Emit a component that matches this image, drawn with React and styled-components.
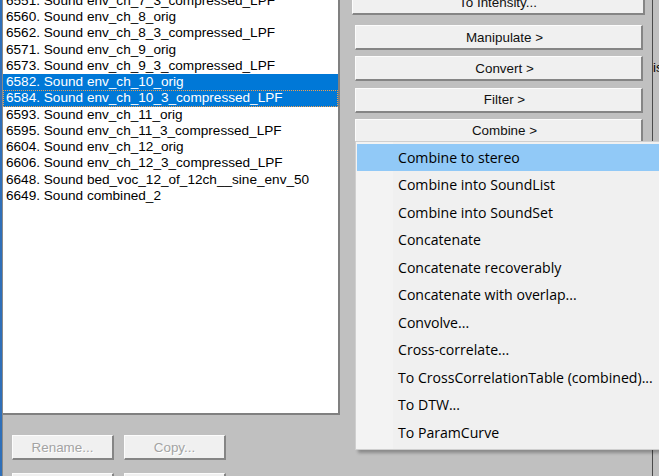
import React from "react";
import styled, { createGlobalStyle } from "styled-components";

const Global = createGlobalStyle`
  html, body { margin: 0; padding: 0; background: #c0c0c0; overflow: hidden; }
  #root { width: 659px; height: 476px; }
`;

const Screen = styled.div`
  position: relative;
  display: flex;
  width: 659px;
  height: 476px;
  overflow: hidden;
  background: #c0c0c0;
  font-family: "Liberation Sans", Arial, sans-serif;
`;

const LeftEdge = styled.div`
  flex: 0 0 3px;
  background: linear-gradient(to right, #2f6fb8 0 2px, #8a8a8a 2px 3px);
`;

const LeftPane = styled.div`
  flex: 0 0 337px;
  display: flex;
  flex-direction: column;
`;

const ListBox = styled.div`
  flex: 0 0 auto;
  height: 413px;
  width: 335px;
  background: #ffffff;
  border-right: 2px solid #808080;
  border-bottom: 2px solid #808080;
  overflow: hidden;
  box-sizing: content-box;
`;

const ListInner = styled.div`
  margin-top: -7.25px;
  display: flex;
  flex-direction: column;
`;

const Row = styled.div`
  height: 16.25px;
  line-height: 16.25px;
  padding-left: 3px;
  font-size: 13.6px;
  white-space: nowrap;
  box-sizing: border-box;
  color: ${(p) => (p.$selected ? "#ffffff" : "#000000")};
  background: ${(p) => (p.$selected ? "#0078d7" : "transparent")};
  outline: ${(p) => (p.$focus ? "1px dotted #f0a050" : "none")};
  outline-offset: -1px;
`;

const ButtonRow = styled.div`
  flex: 0 0 auto;
  display: flex;
  gap: 10px;
  padding-left: 9px;
  margin-top: ${(p) => p.$top}px;
`;

const Button = styled.div`
  box-sizing: border-box;
  width: ${(p) => p.$w || 288}px;
  height: 25px;
  flex: 0 0 auto;
  background: #f0f0f0;
  border-top: 1px solid #fcfcfc;
  border-left: 1px solid #fcfcfc;
  border-right: 2px solid #858585;
  border-bottom: 2px solid #858585;
  display: flex;
  align-items: center;
  justify-content: center;
  padding-left: ${(p) => p.$pl || 0}px;
  font-size: 13.4px;
  white-space: nowrap;
  color: ${(p) => (p.$disabled ? "#a3a3a3" : "#111111")};
  text-shadow: ${(p) => (p.$disabled ? "1px 1px 0 #ffffff" : "none")};
`;

const RightPane = styled.div`
  flex: 0 0 312px;
  display: flex;
  flex-direction: column;
  padding-left: 12px;
  box-sizing: border-box;
`;

const TopButtonWrap = styled.div`
  flex: 0 0 auto;
  margin-top: -10px;
`;

const ButtonStack = styled.div`
  flex: 0 0 auto;
  display: flex;
  flex-direction: column;
  gap: 6.25px;
  margin-top: 10px;
  margin-left: 3px;
`;

const RightEdge = styled.div`
  flex: 0 0 7px;
  border-left: 1px solid #4a4a4a;
  padding-top: 60px;
  font-size: 13.3px;
  overflow: hidden;
  white-space: nowrap;
  color: #000;
`;

const Menu = styled.div`
  position: absolute;
  left: 355px;
  top: 141px;
  width: 320px;
  padding: 1.5px 1px 3px 1px;
  background: linear-gradient(to right, #f3f3f3 0 37px, #f0f0f0 37px);
  border: 1px solid #cfcfcf;
  box-shadow: 3px 3px 3px rgba(0, 0, 0, 0.28);
  font-family: "Open Sans", "Noto Sans", sans-serif;
  font-size: 14.1px;
  color: #000;
`;

const MenuItem = styled.div`
  height: 27.5px;
  line-height: 27.5px;
  padding-left: 41px;
  white-space: nowrap;
  background: ${(p) => (p.$active ? "#91c9f7" : "transparent")};
`;

const rows = [
  "6551. Sound env_ch_7_3_compressed_LPF",
  "6560. Sound env_ch_8_orig",
  "6562. Sound env_ch_8_3_compressed_LPF",
  "6571. Sound env_ch_9_orig",
  "6573. Sound env_ch_9_3_compressed_LPF",
  "6582. Sound env_ch_10_orig",
  "6584. Sound env_ch_10_3_compressed_LPF",
  "6593. Sound env_ch_11_orig",
  "6595. Sound env_ch_11_3_compressed_LPF",
  "6604. Sound env_ch_12_orig",
  "6606. Sound env_ch_12_3_compressed_LPF",
  "6648. Sound bed_voc_12_of_12ch__sine_env_50",
  "6649. Sound combined_2",
];

const menuItems = [
  "Combine to stereo",
  "Combine into SoundList",
  "Combine into SoundSet",
  "Concatenate",
  "Concatenate recoverably",
  "Concatenate with overlap...",
  "Convolve...",
  "Cross-correlate...",
  "To CrossCorrelationTable (combined)...",
  "To DTW...",
  "To ParamCurve",
];

export default function App() {
  return (
    <>
      <Global />
      <Screen>
        <LeftEdge />
        <LeftPane>
          <ListBox>
            <ListInner>
              {rows.map((r, i) => (
                <Row key={r} $selected={i === 5 || i === 6} $focus={i === 6}>
                  {r}
                </Row>
              ))}
            </ListInner>
          </ListBox>
          <ButtonRow $top={20}>
            <Button $w={102} $disabled>Rename...</Button>
            <Button $w={102} $disabled>Copy...</Button>
          </ButtonRow>
          <ButtonRow $top={13}>
            <Button $w={102} $disabled> </Button>
            <Button $w={102} $disabled> </Button>
          </ButtonRow>
        </LeftPane>
        <RightPane>
          <TopButtonWrap>
            <Button $w={293}>To Intensity...</Button>
          </TopButtonWrap>
          <ButtonStack>
            <Button $pl={12}>Manipulate &gt;</Button>
            <Button $pl={12}>Convert &gt;</Button>
            <Button $pl={12}>Filter &gt;</Button>
            <Button $pl={12}>Combine &gt;</Button>
          </ButtonStack>
        </RightPane>
        <RightEdge>is</RightEdge>
        <Menu>
          {menuItems.map((m, i) => (
            <MenuItem key={m} $active={i === 0}>
              {m}
            </MenuItem>
          ))}
        </Menu>
      </Screen>
    </>
  );
}
